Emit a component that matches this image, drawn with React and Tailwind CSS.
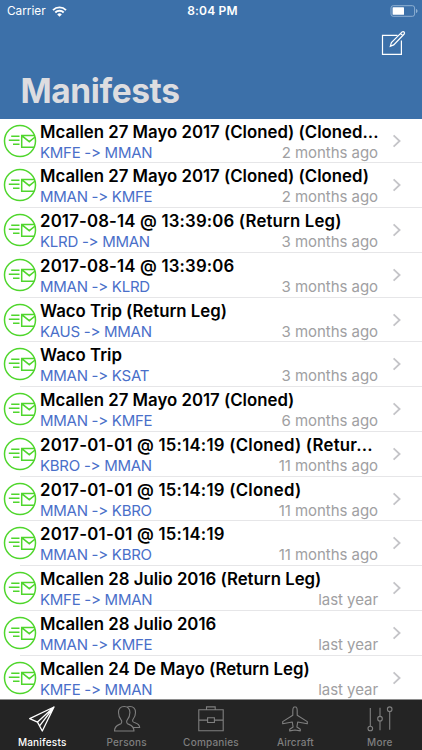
const manifests = [
    { title: 'Mcallen 27 Mayo 2017 (Cloned) (Cloned...', from: 'KMFE', to: 'MMAN', age: '2 months ago' },
    { title: 'Mcallen 27 Mayo 2017 (Cloned) (Cloned)', from: 'MMAN', to: 'KMFE', age: '2 months ago' },
    { title: '2017-08-14 @ 13:39:06 (Return Leg)', from: 'KLRD', to: 'MMAN', age: '3 months ago' },
    { title: '2017-08-14 @ 13:39:06', from: 'MMAN', to: 'KLRD', age: '3 months ago' },
    { title: 'Waco Trip (Return Leg)', from: 'KAUS', to: 'MMAN', age: '3 months ago' },
    { title: 'Waco Trip', from: 'MMAN', to: 'KSAT', age: '3 months ago' },
    { title: 'Mcallen 27 Mayo 2017 (Cloned)', from: 'MMAN', to: 'KMFE', age: '6 months ago' },
    { title: '2017-01-01 @ 15:14:19 (Cloned) (Retur...', from: 'KBRO', to: 'MMAN', age: '11 months ago' },
    { title: '2017-01-01 @ 15:14:19 (Cloned)', from: 'MMAN', to: 'KBRO', age: '11 months ago' },
    { title: '2017-01-01 @ 15:14:19', from: 'MMAN', to: 'KBRO', age: '11 months ago' },
    { title: 'Mcallen 28 Julio 2016 (Return Leg)', from: 'KMFE', to: 'MMAN', age: 'last year' },
    { title: 'Mcallen 28 Julio 2016', from: 'MMAN', to: 'KMFE', age: 'last year' },
    { title: 'Mcallen 24 De Mayo (Return Leg)', from: 'KMFE', to: 'MMAN', age: 'last year' },
];

function TabIcon({ children }) {
    return (
        <svg
            width="28" height="28" viewBox="0 0 28 28"
            fill="none" stroke="currentColor" strokeWidth="1.1" strokeLinejoin="round"
        >
            {children}
        </svg>
    );
}

const tabs = [
    {
        label: 'Manifests',
        icon: (
            <TabIcon>
                <path d="M26 2 1.7 13.6l7.8 3.5 4.8 8.900L26 2ZM9.5 17.100 26 2 11.600 20.800" strokeWidth="1.3" />
            </TabIcon>
        ),
    },
    {
        label: 'Persons',
        icon: (
            <TabIcon>
                <path d="M11.200 1.500C7.600 1.500 5.500 3.800 5.500 7.600c0 3.200 1 5.400 2.600 7.200.9 1 .9 3.100-.2 3.900C6.300 19.800 1.500 20 1.500 26H21c0-6-4.900-6.200-6.500-7.300-1.100-.8-1.100-2.900-.2-3.900 1.600-1.800 2.600-4 2.600-7.200 0-3.800-2.100-6.100-5.700-6.100Z" />
                <path d="M14 2.300c.8-.5 1.700-.8 2.900-.8 3.600 0 5.600 2.300 5.600 6.100 0 3.200-.9 4.800-2.300 6.400-.8 1-.8 2.400.3 3.100 1.700 1 5.900 1.100 6.200 5.400h-6.600" />
            </TabIcon>
        ),
    },
    {
        label: 'Companies',
        icon: (
            <TabIcon>
                <path d="M1.8 4.7h24.4v21.1H1.8zM9.5 4.7V1.9h8.7v2.8M1.8 15.1h8.800m6.800 0h8.800M10.600 12.800h6.800v4.700h-6.800z" strokeLinejoin="miter" />
            </TabIcon>
        ),
    },
    {
        label: 'Aircraft',
        icon: (
            <TabIcon>
                <path d="M14 1.800c-1.400 0-2.200 1.800-2.200 4v4.400L1.700 16.600v2.200l9.600-1.800.8 5-3.400 2.300v1.600l5.300-.9 5.300.9v-1.600L15.900 22l.8-5 9.600 1.800v-2.200l-10.100-6.400V5.800c0-2.200-.8-4-2.200-4Z" />
            </TabIcon>
        ),
    },
    {
        label: 'More',
        icon: (
            <TabIcon>
                <path d="M4.300 3v18.200M14 2.800v8.500m0 4.700v9.300M23.700 6.600v18.100" />
                <circle cx="4.3" cy="23.5" r="2.3" />
                <circle cx="14" cy="13.7" r="2.3" />
                <circle cx="23.7" cy="4.2" r="2.3" />
            </TabIcon>
        ),
    },
];

function StatusBar() {
    return (
        <div className="grid grid-cols-3 items-center h-[22px] pl-[7px] pr-1">
            <div className="flex items-center gap-[6px]">
                <span className="text-[11.8px] leading-[14px]">Carrier</span>
                <svg width="15" height="11" viewBox="0 0 15 11" fill="none" stroke="currentColor" strokeWidth="1.9">
                    <path d="M1 4.100a9.200 9.200 0 0 1 13 0M3.300 6.500a5.900 5.900 0 0 1 8.400 0" />
                    <path d="M7.500 10.700 5.200 8.400a3.250 3.250 0 0 1 4.600 0Z" fill="currentColor" stroke="none" />
                </svg>
            </div>
            <span className="text-center text-[12px] leading-[14px] font-semibold tracking-[0.2px]">8:04 PM</span>
            <svg className="justify-self-end" width="28" height="12" viewBox="0 0 28 12" fill="none">
                <rect x="1" y=".7" width="23.6" height="10.6" rx="2.2" stroke="#8fb0d2" />
                <rect x="2.6" y="2.2" width="11.4" height="7.6" rx=".6" fill="#fff" />
                <path d="M26 4v4c1-.3 1.500-1 1.500-2S27 4.300 26 4Z" fill="#8fb0d2" />
            </svg>
        </div>
    );
}

// Green ring with an envelope in flight
function SentBadge() {
    return (
        <svg className="shrink-0" width="34" height="34" viewBox="0 0 34 34" fill="none" stroke="#4fd62c" strokeWidth="1.5">
            <circle cx="17" cy="17" r="15.5" />
            <path d="M31.800 11.500H18.700v11.700h12.500M19 11.800l7.300 5.900 5.800-4.700M8.200 12.200h8.300M5.800 16.200h10.700M10 20.200h6.500" />
        </svg>
    );
}

// Timestamp titles are set a little wider
function titleTracking(title) {
    if (title.startsWith('2017-01')) return 'tracking-[0.23px]';
    if (title.startsWith('2017')) return 'tracking-[0.17px]';
    return 'tracking-normal';
}

function ManifestRow({ title, from, to, age, last }) {
    return (
        <li className="flex h-[44.77px] pl-[3px]">
            <div className="flex pt-[5px] w-[17px]">
                <SentBadge />
            </div>
            <div className={`flex flex-1 min-w-0 pl-[20px] ${last ? '' : 'border-b border-[#e6e6e8]'}`}>
                <div className="w-[338px] pt-[2px]">
                    <div className={`whitespace-nowrap text-[16.8px] leading-[22px] font-semibold text-black ${titleTracking(title)}`}>
                        {title}
                    </div>
                    <div className="flex justify-between text-[15px] leading-[19px]">
                        <span className="tracking-[-0.27px] text-[#4a6fc9]">{from} -&gt; {to}</span>
                        <span className="tracking-[-0.05px] text-[#a0a0a2]">{age}</span>
                    </div>
                </div>
                <svg className="mt-[15px] ml-[14px]" width="10" height="14" viewBox="0 0 10 14" fill="none" stroke="#c4c4c8" strokeWidth="1.8">
                    <path d="m1.600 1.300 6 5.700-6 5.700" />
                </svg>
            </div>
        </li>
    );
}

export default function App() {
    return (
        <div className="flex flex-col w-[422px] h-[750px] overflow-hidden bg-white font-['Inter',sans-serif] [font-feature-settings:'calt'_0]">
            {/* Navigation header */}
            <header className="h-[118.5px] shrink-0 bg-[#3c70a9] text-white">
                <StatusBar />
                <div className="flex justify-end pr-[16px] pt-[8px]">
                    <svg width="25" height="26" viewBox="0 0 25 26" fill="none" stroke="#fff" strokeWidth="1.2">
                        <path d="M16.500 5.300H1.500v19h18.900V10.500" />
                        <path d="m9.300 16.300 1.100-3.800L21.100 1.900q1.100-.8 2 .1.900 1 .1 2L12.700 14.900l-3.400 1.400ZM19.500 3.500l2.200 2.200" />
                    </svg>
                </div>
                <h1 className="pl-[20.5px] pt-[13.5px] text-[33.5px] leading-[42px] font-bold tracking-[-0.4px] text-[#dddde0]">Manifests</h1>
            </header>

            {/* Manifest list */}
            <ul className="flex-1 min-h-0 overflow-hidden">
                {manifests.map((m, i) => (
                    <ManifestRow key={i} {...m} last={i === manifests.length - 1} />
                ))}
            </ul>

            {/* Tab bar */}
            <nav className="flex h-[51px] shrink-0 border-t border-[#8e8e8e] bg-[#242424]">
                {tabs.map((tab, i) => (
                    <button
                        key={tab.label}
                        className={`flex flex-1 flex-col items-center pt-[5px] ${i === 0 ? 'text-white' : 'text-[#7f7f7f]'}`}
                    >
                        {tab.icon}
                        <span className="mt-[3px] text-[10px] leading-[13px] font-medium tracking-[0.2px]">{tab.label}</span>
                    </button>
                ))}
            </nav>
        </div>
    );
}
